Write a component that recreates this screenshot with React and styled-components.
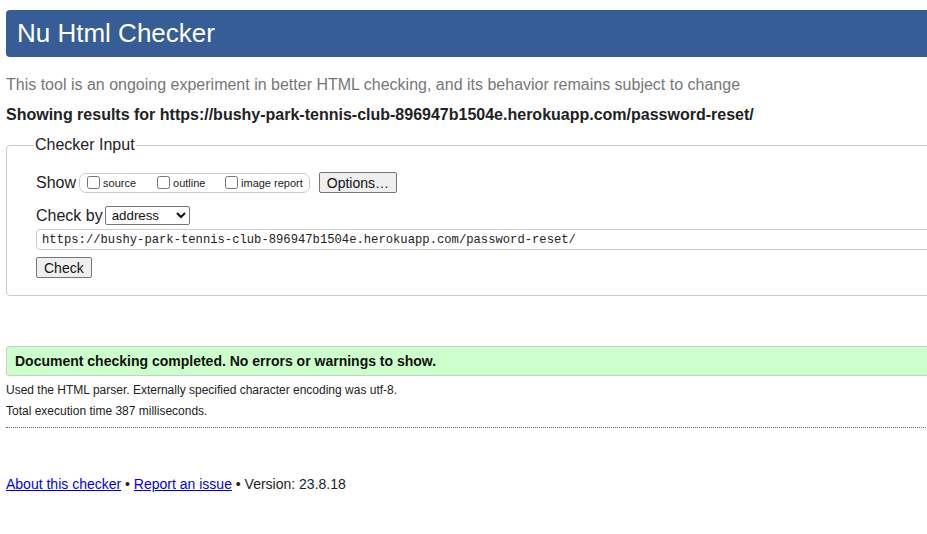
import React from 'react'
import styled, {createGlobalStyle} from 'styled-components'

const GlobalStyle = createGlobalStyle`
  html, body {
    margin: 0;
    padding: 0;
    overflow: hidden;
    background: #fff;
  }
  body {
    font-family: "Liberation Sans", Arial, sans-serif;
    color: #222;
  }
`

const Page = styled.div`
  width: 1100px;
  padding: 10px 6px 40px;
`

const Header = styled.h1`
  margin: 0;
  height: 47px;
  display: flex;
  align-items: center;
  padding: 0 11px;
  background: #365d95;
  color: #fff;
  font-size: 26px;
  font-weight: normal;
  border-radius: 4px;
`

const Intro = styled.p`
  margin: 18px 0 0;
  font-size: 16px;
  line-height: 20px;
  color: #777;
`

const Results = styled.p`
  margin: 10px 0 0;
  font-size: 16px;
  line-height: 20px;
  font-weight: bold;
  color: #222;
`

const Fieldset = styled.fieldset`
  margin: 11px 0 0;
  padding: 9px 29px 17px;
  border: 1px solid #ccc;
  border-radius: 4px;
`

const Legend = styled.legend`
  padding: 0 1px;
  margin-left: -2px;
  font-size: 16px;
  color: #222;
`

const Row = styled.div`
  display: flex;
  align-items: center;
  margin-top: ${p => p.$top || 0}px;
  font-size: 16px;
  color: #222;
`

const Options = styled.div`
  display: flex;
  align-items: center;
  height: 18px;
  padding: 0 6px 0 7px;
  border: 1px solid #ccc;
  border-radius: 7px;
  margin-left: 3px;
`

const OptionLabel = styled.label`
  display: flex;
  align-items: center;
  min-width: ${p => p.$w || 0}px;
  font-size: 11px;
  color: #222;
`

const Box = styled.input.attrs({type: 'checkbox'})`
  margin: 0 3px 0 0;
  width: 13px;
  height: 13px;
`

const Button = styled.button`
  font-family: "Liberation Sans", Arial, sans-serif;
  font-size: 14px;
  height: 21px;
  padding: 0 7px;
  color: #111;
  background: #efefef;
  border: 1px solid #767676;
  border-radius: 2px;
  margin-left: ${p => p.$left || 0}px;
`

const Select = styled.select`
  font-family: "Liberation Sans", Arial, sans-serif;
  font-size: 13.3px;
  width: 85px;
  height: 19px;
  margin-left: 2px;
  padding: 0 2px;
  color: #111;
  background: #fff;
  border: 1px solid #767676;
  border-radius: 2px;
`

const UrlInput = styled.input`
  display: block;
  box-sizing: border-box;
  width: 100%;
  height: 21px;
  margin-top: 4px;
  padding: 0 5px;
  font-family: "Liberation Mono", "DejaVu Sans Mono", monospace;
  font-size: 12.2px;
  color: #222;
  border: 1px solid #ccc;
  border-radius: 4px;
`

const Success = styled.div`
  margin-top: 50px;
  height: 28px;
  display: flex;
  align-items: center;
  padding: 0 8px;
  background: #ccffcc;
  border: 1px solid #ccc;
  border-radius: 3px;
  font-size: 14px;
  font-weight: bold;
  color: #111;
`

const Detail = styled.p`
  margin: ${p => p.$top || 0}px 0 0;
  font-size: 12px;
  line-height: 15px;
  color: #222;
`

const Divider = styled.hr`
  margin: 8px 0 0;
  border: 0;
  border-top: 1px dotted #666;
`

const Footer = styled.p`
  margin: 48px 0 0;
  font-size: 14px;
  color: #222;

  a {
    color: #00e;
    text-decoration: underline;
  }
`

export default function App() {
  const url = 'https://bushy-park-tennis-club-896947b1504e.herokuapp.com/password-reset/'
  return (
    <>
      <GlobalStyle/>
      <Page>
        <Header>Nu Html Checker</Header>
        <Intro>This tool is an ongoing experiment in better HTML checking, and its behavior remains subject to change</Intro>
        <Results>Showing results for {url}</Results>

        <Fieldset>
          <Legend>Checker Input</Legend>
          <Row $top={9}>
            Show
            <Options>
              <OptionLabel $w={70}><Box/>source</OptionLabel>
              <OptionLabel $w={68}><Box/>outline</OptionLabel>
              <OptionLabel><Box/>image report</OptionLabel>
            </Options>
            <Button $left={9}>Options…</Button>
          </Row>
          <Row $top={13}>
            Check by
            <Select defaultValue="address">
              <option value="address">address</option>
              <option value="file">file upload</option>
              <option value="text">text input</option>
            </Select>
          </Row>
          <UrlInput defaultValue={url}/>
          <Row $top={7}>
            <Button>Check</Button>
          </Row>
        </Fieldset>

        <Success>Document checking completed. No errors or warnings to show.</Success>
        <Detail $top={7}>Used the HTML parser. Externally specified character encoding was utf-8.</Detail>
        <Detail $top={6}>Total execution time 387 milliseconds.</Detail>
        <Divider/>

        <Footer>
          <a href="#about">About this checker</a> • <a href="#issue">Report an issue</a> • Version: 23.8.18
        </Footer>
      </Page>
    </>
  )
}
